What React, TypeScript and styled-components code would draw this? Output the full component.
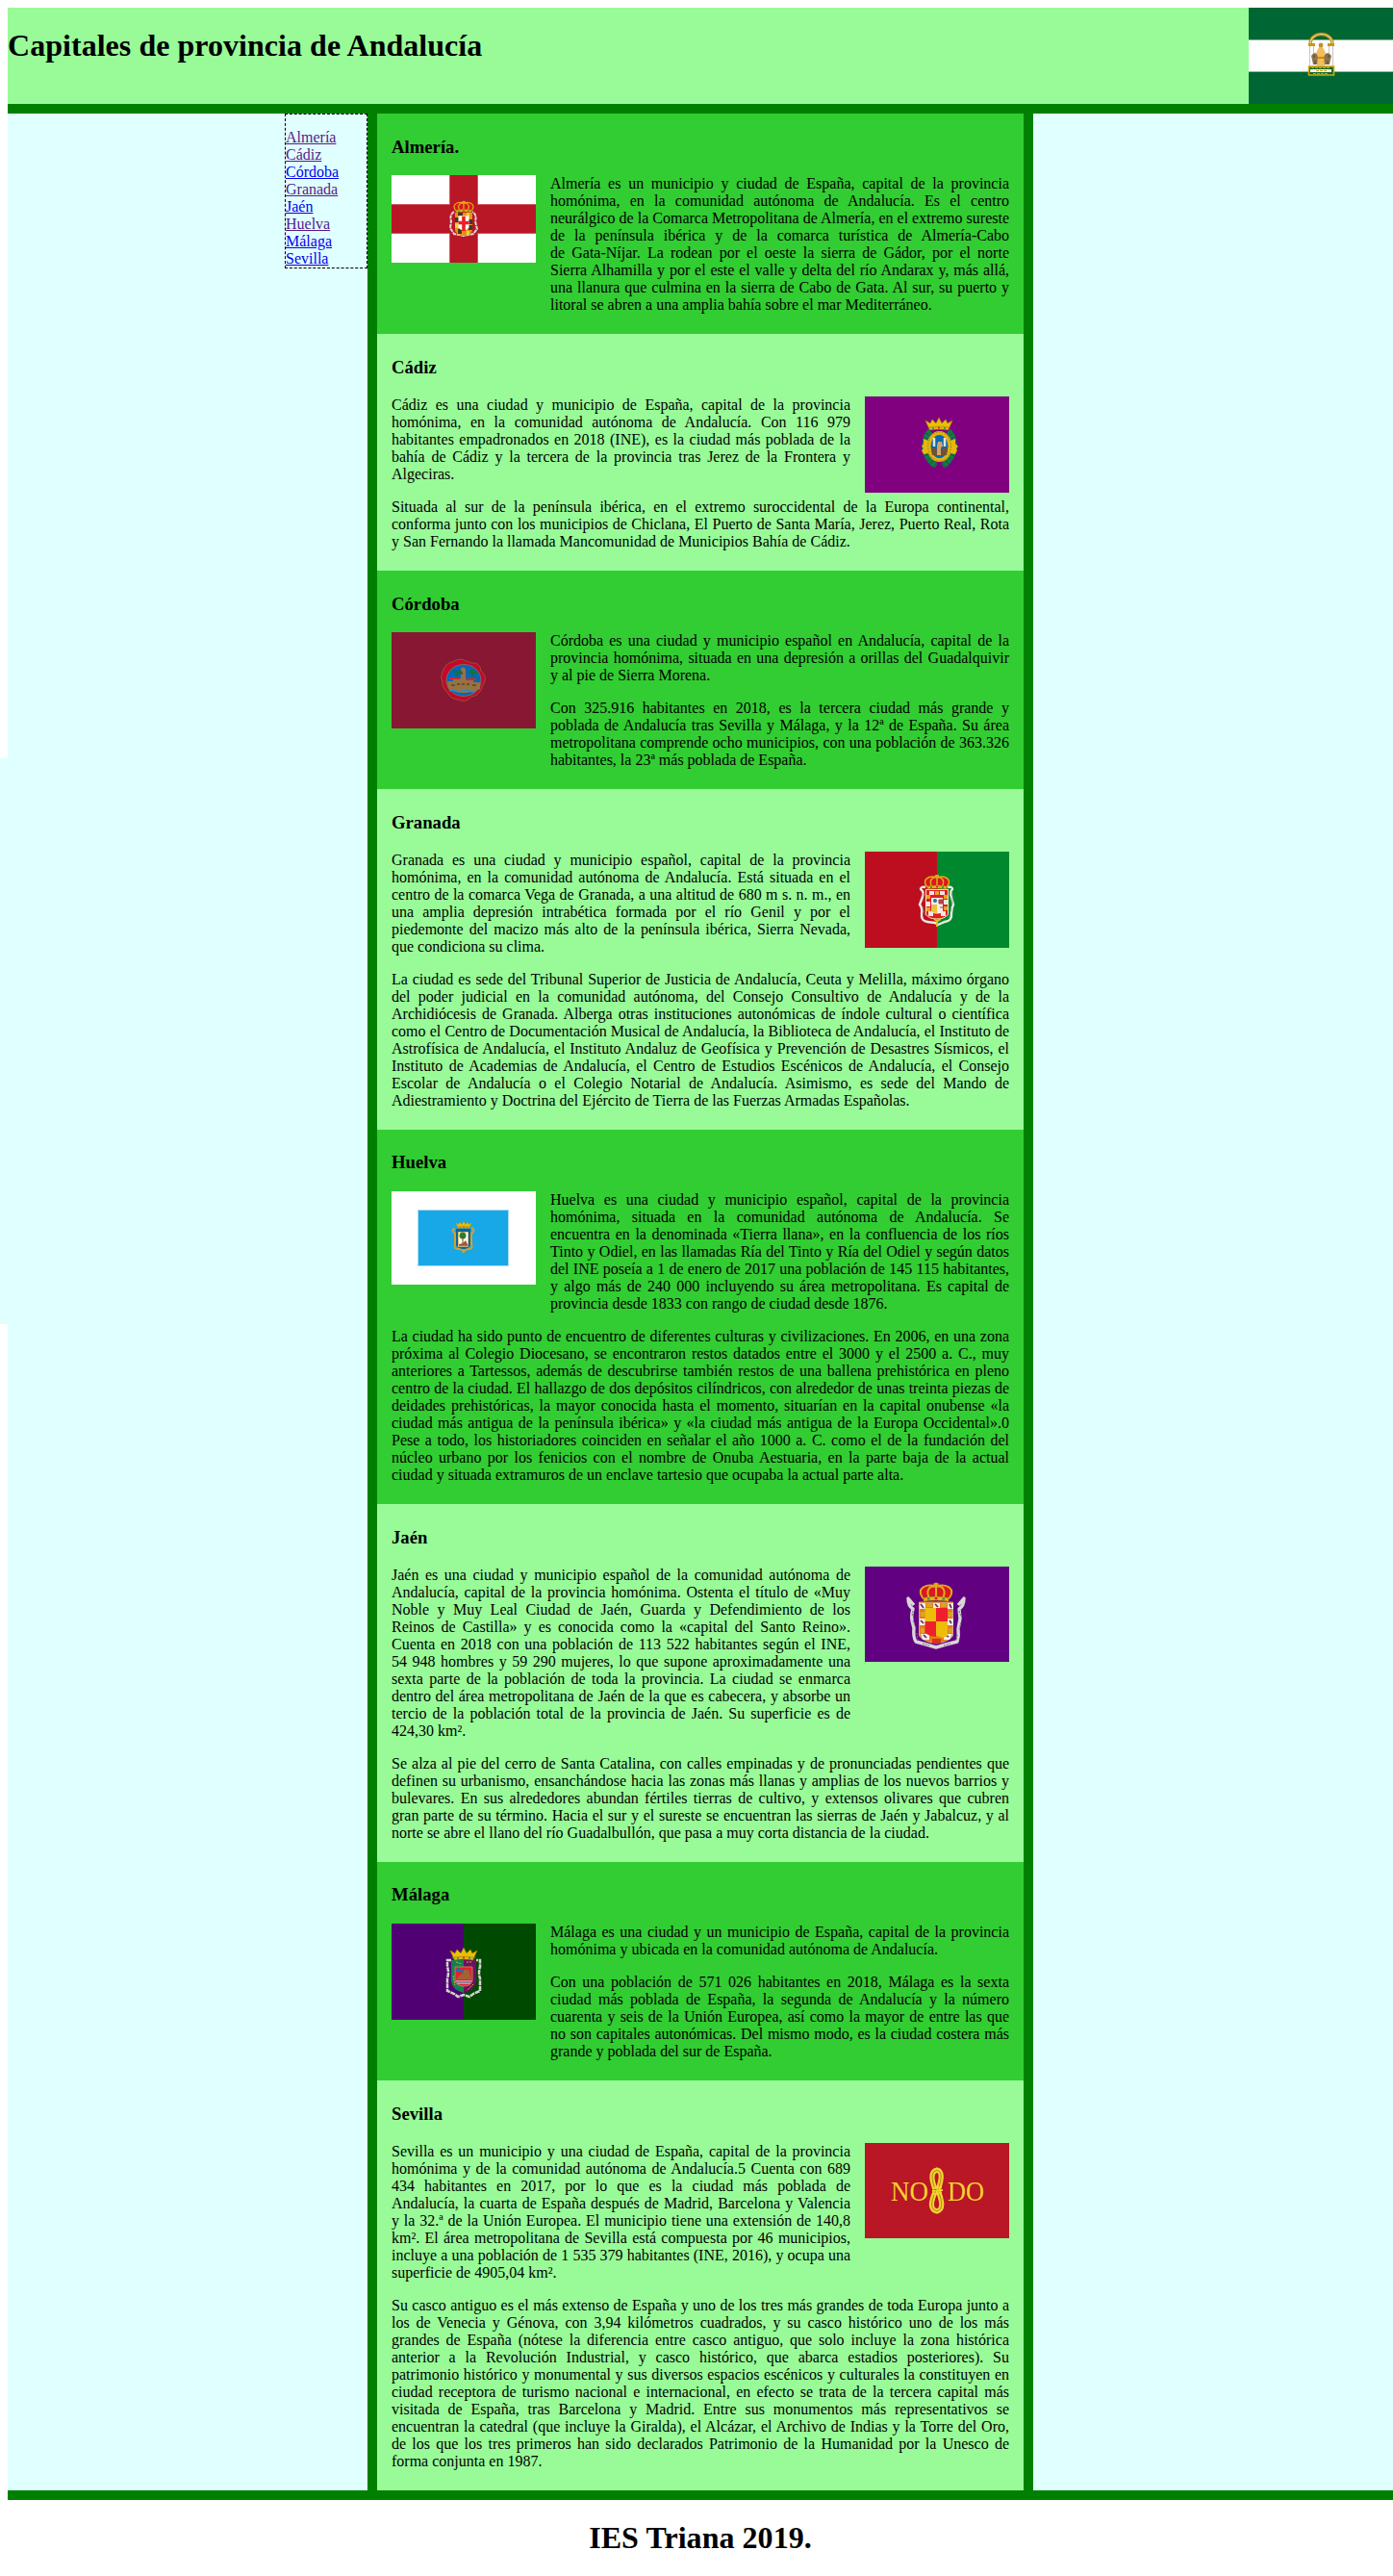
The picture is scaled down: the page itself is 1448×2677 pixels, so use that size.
import React from "react";
import styled, { createGlobalStyle } from "styled-components";

const Global = createGlobalStyle`
  body { margin: 0; background: #fff; color: #000; font: 16px/18px "Liberation Serif", "Times New Roman", serif; }
`;

const Page = styled.div`
  display: grid;
  grid-template-columns: 8px 1440px;
  width: 1448px;
  height: 2677px;
  overflow: hidden;
`;
const Gutter = styled.div`
  height: 588px;
  margin-top: 788px;
  background: #e0ffff;
`;
const Content = styled.div`
  padding-top: 8px;
`;
const Header = styled.header`
  display: flex;
  justify-content: space-between;
  align-items: flex-start;
  height: 100px;
  background: #98fb98;
  border-bottom: 10px solid #008000;
`;
const Title = styled.h1`
  margin: 21.44px 0;
  font-size: 32px;
  line-height: 37px;
  letter-spacing: 0.04px;
`;
const Columns = styled.div`
  display: grid;
  grid-template-columns: 374px 692px 374px;
  background: #e0ffff;
  border-bottom: 10px solid #008000;
`;
const Side = styled.div`
  display: flex;
  justify-content: flex-end;
  align-items: flex-start;
`;
const Nav = styled.nav`
  box-sizing: border-box;
  display: flex;
  flex-direction: column;
  align-items: flex-start;
  width: 86px;
  padding-top: 15px;
  border: 1px dashed #000;
`;
const NavLink = styled.a<{ $visited?: boolean }>`
  color: ${(p) => (p.$visited ? "#551a8b" : "#0000ee")};
  text-decoration: underline;
`;
const Main = styled.main`
  border: solid #008000;
  border-width: 0 10px;
`;
const Section = styled.section<{ $dark: boolean }>`
  display: flow-root;
  padding: 5px 15px;
  background: ${(p) => (p.$dark ? "#32cd32" : "#98fb98")};
`;
const Heading = styled.h3`
  margin: 18.72px 0;
  font-size: 18.72px;
  line-height: 22px;
`;
const Text = styled.p`
  display: flow-root;
  margin: 16px 0;
  text-align: justify;
`;
const NoWrap = styled.span`
  white-space: nowrap;
`;
const Flag = styled.svg<{ $side?: "left" | "right" }>`
  display: block;
  flex: none;
  float: ${(p) => p.$side ?? "none"};
  margin: ${(p) => (p.$side === "left" ? "0 15px 0 0" : p.$side === "right" ? "0 0 0 15px" : "0")};
`;
const Foot = styled.footer`
  text-align: center;
`;

/* Phrases between square brackets are kept together on one line. */
const phrases = (text: string) =>
  text.split(/[[\]]/).map((part, i) => (i % 2 ? <NoWrap key={i}>{part}</NoWrap> : part));

/* Royal crown, 26 wide and 14 high, centred on x = 0 with its base at y = 0. */
const Crown = ({ x, y, s = 1, open = false }: { x: number; y: number; s?: number; open?: boolean }) => (
  <g transform={`translate(${x} ${y}) scale(${s})`}>
    {open ? (
      <path d="M-10 0L-14-9l5 3 2-4 4 4 3-6 3 6 4-4 2 4 5-3-4 9z" fill="#eac102" stroke="#a8820a" strokeWidth=".6" />
    ) : (
      <>
        <path d="M-10-1C-17-9-8-14 0-11 8-14 17-9 10-1z" fill="#d9181f" />
        <path d="M-10-1C-17-9-8-14 0-11 8-14 17-9 10-1M-5-1C-9-8-5-12 0-11 5-12 9-8 5-1M0-1v-13M-2-13h4" fill="none" stroke="#e0ae18" strokeWidth="1.5" />
      </>
    )}
    <path d="M-10-2Q0-4 10-2V1Q0-1-10 1z" fill="#e4b51b" stroke="#9a700b" strokeWidth=".5" />
    <path d="M-7-1h2M5-1h2" stroke="#159447" strokeWidth="1.4" />
    <path d="M-1-1.5h2" stroke="#df1721" strokeWidth="1.6" />
  </g>
);

const Andalucia = () => (
  <Flag width="150" height="100" viewBox="0 0 150 100" role="img">
    <path fill="#006633" d="M0 0h150v100H0z" />
    <path fill="#fff" stroke="#8bb8a0" d="M-1 33.5h152v33H-1z" />
    <path d="M64 38c0-14 23-14 23 0" fill="none" stroke="#b98d13" strokeWidth="3.4" />
    <path d="M64 38c0-14 23-14 23 0" fill="none" stroke="#f2dda0" strokeWidth="1.2" />
    <path d="M63.500 40v20M67.500 40v14M83.500 40v14M87.500 40v20" stroke="#c5c5c5" />
    <path d="M62 37h7v3h-7zM82 37h7v3h-7z" fill="#c79a11" />
    <path d="M65 50q4-6 8 0v9h-6zM86 50q-4-6-8 0v9h6z" fill="#8d7350" />
    <path d="M68 49v3M83 49v3M69 55v4M82 55v4" stroke="#54442e" />
    <circle cx="75" cy="39" r="2.400" fill="#c98d2c" />
    <path d="M73 41h4l3 6-2 4 1 9h-8l1-9-2-4z" fill="#f4bd5c" />
    <path d="M71 51h8v2h-8z" fill="#c38d04" />
    <path d="M62.500 61h26v9h-26z" fill="#08682f" stroke="#d2a808" strokeWidth="1.600" />
    <path d="M64 64h22v3H64z" fill="#f5f2d8" />
    <path d="M65 62.500h20M67 68.500h16M70 65.500h11" stroke="#c9a21a" strokeDasharray="3 1" />
  </Flag>
);

const Almeria = () => (
  <Flag width="150" height="91" viewBox="0 0 150 91" role="img" $side="left">
    <path fill="#fff" d="M0 0h150v91H0z" />
    <path fill="#b91626" d="M60 0h30v30h60v31H90v30H60V61H0V30h60z" />
    <path d="M60.500 0v30.500H0M89.500 0v30.500h61M60.500 91V60.500H0M89.500 91V60.500h61" fill="none" stroke="#d76871" strokeWidth=".8" />
    <path d="M65 38q-5 3-3 10l-1 7 4 6 10 2 10-2 4-5-2-8q2-7-3-10" fill="none" stroke="#ddd8d5" strokeWidth="2" strokeDasharray="4 .7" />
    <path d="M66 39h18v19q-3 5-9 5t-9-5z" fill="#e69118" />
    <path d="M66 44h4v5h-4zM80 52h4v5h-4zM69 39h5v3h-5zM78 46h6v5h-6zM69 56h4v5h-4z" fill="#453928" />
    <path d="M66 50h4v5h-4zM78 39h3v4h-3zM78 58h3v4h-3z" fill="#edcf42" />
    <path d="M69.500 42.500h11v12q-5.500 6-11 0z" fill="#fff" />
    <path d="M75 43v15M69.500 49.500h11" stroke="#ef1c25" strokeWidth="3.600" />
    <Crown x={75} y={38} s={0.8} />
  </Flag>
);

const Cadiz = () => (
  <Flag width="150" height="100" viewBox="0 0 150 100" role="img" $side="right">
    <path fill="#800080" d="M0 0h150v100H0z" />
    <path d="M68 36c-8 8-9 26 6 36M87 36c8 8 9 26-6 36" fill="none" stroke="#078044" strokeWidth="6" strokeDasharray="4 .5" />
    <path d="M61 44l5 2v13l-5 1-2-4 2-2-2-2 2-3zM94 44l-5 2v13l5 1 2-4-1-2 2-2-3-3z" fill="#e5b80e" />
    <ellipse cx="77.500" cy="52" rx="11" ry="14" fill="#0869b2" stroke="#dfb411" strokeWidth="4" />
    <ellipse cx="77.500" cy="52" rx="12" ry="15" fill="none" stroke="#826e13" strokeWidth=".9" strokeDasharray="1 2" />
    <path d="M72 43v9M83 43v9" stroke="#e9e3cc" strokeWidth="2.500" />
    <path d="M69 55q4-5 6 1l1 5h-6zM86 55q-4-5-6 1l-1 5h6z" fill="#715136" />
    <path d="M75 51l1-4h4l1 5-2 1v8h-4z" fill="#d7a36a" />
    <Crown x={77} y={34} open />
  </Flag>
);

const Cordoba = () => (
  <Flag width="150" height="100" viewBox="0 0 150 100" role="img" $side="left">
    <path fill="#871733" d="M0 0h150v100H0z" />
    <path d="M73 28q5 2 10 4 9-1 10 8 6 6 4 11-3 5-4 9-3 6-10 7-6 7-14 3-8-1-10-6-7-7-6-12-3-5 0-11 3-9 10-10 5-3 10-3z" fill="#c20929" stroke="#95603b" strokeWidth=".8" />
    <ellipse cx="75" cy="50" rx="18" ry="16.500" fill="#0866b6" stroke="#9a7050" strokeWidth=".8" />
    <path d="M58 51h6v-3h8V38l2-2 3 2v10h8v4h7v7q-9 4-17 4-9 0-16-4z" fill="#967343" />
    <path d="M60 47h11v2H60zM77 48h11v2H77z" fill="#d22834" />
    <path d="M65 41l4 3 4-3-4-1zM80 41l4 3 5-2-5-3zM84 42v6M68 43v5" stroke="#16723a" fill="#16723a" />
    <path d="M62 55h4M68 54h3M73 54h3M78 54h3M84 55h4M73 41v3" stroke="#5d4325" strokeWidth="1.500" />
    <path d="M60 61q4-2 7 0t7 0 7 0 7 0" fill="none" stroke="#2d8aca" strokeWidth="1.500" />
  </Flag>
);

const Granada = () => (
  <Flag width="150" height="100" viewBox="0 0 150 100" role="img" $side="right">
    <path fill="#bd0e20" d="M0 0h75v100H0z" />
    <path fill="#00882e" d="M75 0h75v100H75z" />
    <path d="M63 37q-5-1-5 2 4 3 2 8l-3 8q3 4 2 9-1 8 6 9l8 1 3 2 7-3q8-1 7-9 0-5 2-9l-2-8q-2-5 1-8 0-3-5-2" fill="none" stroke="#eeeae2" strokeWidth="2.400" />
    <path d="M61 43v9M60 57l3 10M91 43v11M90 59l-3 10" fill="none" stroke="#817f70" strokeWidth=".7" />
    <path d="M63.500 39.500h23V65q-3 5-11.500 5-9 0-11.500-5z" fill="#e11d24" stroke="#eee2b7" />
    <path d="M67 41h5v4h-5zM78 41h5v4h-5zM64 52h4v5h-4zM82 50h4v5h-4zM66 62h5v5h-5zM79 62h5v5h-5z" fill="#f1e5df" />
    <path d="M64 45h4v4h-4zM82 45h4v4h-4zM64 58h4v4h-4zM82 57h4v4h-4zM73 41h4v4h-4z" fill="#e7a41f" />
    <path d="M69 48h12v15q-6 3-12 0z" fill="#f2eee7" />
    <path d="M69 55h6v9q-4 0-6-2z" fill="#edc33b" />
    <circle cx="73" cy="51" r="2" fill="#2f6caa" />
    <path d="M77 50h4v4h-4zM78 58h3" fill="#b84443" stroke="#a5484c" />
    <path d="M72 70l3 2 4-2M75 71v7" stroke="#e3bd24" strokeWidth="2" fill="none" />
    <Crown x={75} y={38} />
  </Flag>
);

const Huelva = () => (
  <Flag width="150" height="97" viewBox="0 0 150 97" role="img" $side="left">
    <path fill="#fff" d="M0 0h150v97H0z" />
    <path fill="#18a8e8" stroke="#a8dcf4" d="M27.500 19.500h94v58h-94z" />
    <path d="M66 39q-5 1 0 5v11q-2 5 4 5 5 0 5 4 0-4 5-4 5 0 3-5V44q5-4 0-6" fill="none" stroke="#d9a223" strokeWidth="2" />
    <path d="M67 39h15v17q-2 4-7 4t-8-4z" fill="#0b639f" />
    <path d="M69.500 42.500h10v15h-10z" fill="#fff" stroke="#e3c270" />
    <circle cx="74" cy="46" r="3.500" fill="#297f32" />
    <path d="M74 47v10" stroke="#6d4623" />
    <path d="M70 55l4-1 3-3 3 6H70z" fill="#ac532d" />
    <path d="M70 57h10" stroke="#79a8bc" />
    <Crown x={75} y={38} s={0.6} open />
  </Flag>
);

const Jaen = () => (
  <Flag width="150" height="99" viewBox="0 0 150 99" role="img" $side="right">
    <path fill="#620082" d="M0 0h150v99H0z" />
    <path d="M51 40l-6-7q0 8 5 11-2 7-1 12l2 8q-1 9 2 14l11 3 10 3 10-3 12-3q2-6 1-13l2-11-1-10q5-3 5-11l-6 7" fill="none" stroke="#d9d6d7" strokeWidth="3.400" strokeLinejoin="round" />
    <path d="M50 46l-1 6M50 56l3 8M54 69l1 8M98 46l2 6M100 58l-2 7M96 71l-1 6M60 80l7 2M82 82l7-2" fill="none" stroke="#77727d" strokeDasharray="2 1" />
    <path d="M56.500 37h35v35q-4 6-17.500 8-13-2-17.500-8z" fill="#e77b19" stroke="#e7d4b5" strokeWidth=".7" />
    <path d="M57 38h6v6h-6zM71 38h7v5h-7zM86 38h6v6h-6zM57 54h6v7h-6zM86 54h6v7h-6zM58 70h9v6h-7zM82 70h9l-3 6h-6z" fill="#f5eee9" />
    <path d="M58 39l3 4M73 39l3 3M88 39l2 4M58 56l3 3M88 56l2 3M61 71l3 3M84 71l3 2" stroke="#613150" strokeWidth="1.700" />
    <path d="M64 38h6v4h-6zM79 38h6v4h-6zM57.500 47h5v5h-5zM87 47h4v5h-4zM58 64h4v5h-4zM87 64h4v5h-4z" fill="#dba323" />
    <path d="M62.500 43H74v14H62.500zM74 57h12v15l-5 2-7-2z" fill="#edbd0a" />
    <path d="M74 43h12v14H74zM62.500 57H74v16l-6-1-5.500-3z" fill="#ef202c" />
    <path d="M70 75h9v5h-9z" fill="#d63320" />
    <Crown x={74} y={35} s={1.3} />
  </Flag>
);

const Malaga = () => (
  <Flag width="150" height="100" viewBox="0 0 150 100" role="img" $side="left">
    <path fill="#500073" d="M0 0h75v100H0z" />
    <path fill="#004900" d="M75 0h75v100H75z" />
    <path d="M62 38h-4v7q2 6 0 12v13l7 3 4 3 6-2 6 2 4-3 7-3V57q-2-6 0-12v-7h-4" fill="none" stroke="#d2d4cf" strokeWidth="2.500" strokeDasharray="5 .7" />
    <path d="M62 38h13v34q-12-3-13-12z" fill="#118150" />
    <path d="M75 38h13v22q-1 9-13 12z" fill="#710e65" />
    <path d="M66 45h18v14q-1 6-9 6t-9-6z" fill="#e02232" stroke="#b7834c" />
    <path d="M67 58q5-6 7-6l1-4h5l3 10z" fill="#a06335" />
    <path d="M67 49h5M69 46v4M73 48v3" stroke="#276cae" strokeWidth="2" />
    <path d="M67 60h16M68 62h14" stroke="#e5eef4" />
    <path d="M67 61h16" stroke="#347cae" />
    <path d="M67 40l6 2M64 54l2 10M78 40h6M85 63l-6 6" stroke="#d4a337" strokeDasharray="2 1" />
    <path d="M62 36q13-14 26 0z" fill="#147d45" />
    <Crown x={75} y={37} open />
  </Flag>
);

const Motto = styled.text`
  font: 29px "Liberation Serif", "Times New Roman", serif;
  fill: #f4d32d;
`;
const Sevilla = () => (
  <Flag width="150" height="99" viewBox="0 0 150 99" role="img" $side="right">
    <path fill="#b91626" d="M0 0h150v99H0z" />
    <Motto x="27" y="60" textLength="39" lengthAdjust="spacingAndGlyphs">NO</Motto>
    <Motto x="86" y="60" textLength="38" lengthAdjust="spacingAndGlyphs">DO</Motto>
    <g fill="none" stroke="#f4d32d" strokeWidth="5.200">
      <path d="M73 48q-7-18 2-20 8 2 1 21" />
      <path d="M73 51q-8 18 2 20 9-2 1-22" />
    </g>
    <g fill="none" stroke="#a46d1d" strokeWidth=".8">
      <path d="M73 48q-7-18 2-20 8 2 1 21" />
      <path d="M73 51q-8 18 2 20 9-2 1-22" />
    </g>
    <path d="M70 47l10-1M70 50l11-1M71 53l9-1" stroke="#f4d32d" strokeWidth="2" />
  </Flag>
);

const links = [
  { name: "Almería", visited: true },
  { name: "Cádiz", visited: true },
  { name: "Córdoba" },
  { name: "Granada", visited: true },
  { name: "Jaén" },
  { name: "Huelva", visited: true },
  { name: "Málaga" },
  { name: "Sevilla" },
];

const cities = [
  {
    id: "Almería", title: "Almería.", Emblem: Almeria,
    text: ["Almería es un municipio y ciudad de España, capital de la provincia homónima, en la comunidad autónoma de Andalucía. Es el centro neurálgico de la Comarca Metropolitana de Almería, en el extremo sureste de la península ibérica y de la comarca turística de Almería-Cabo [de Gata-Níjar.] La rodean por el oeste la sierra de Gádor, por el norte [Sierra Alhamilla] y por el este el valle y delta del río Andarax y, más allá, una llanura que culmina en la sierra de Cabo de Gata. Al sur, su puerto y litoral se abren a una amplia bahía sobre el mar Mediterráneo."],
  },
  {
    id: "Cádiz", title: "Cádiz", Emblem: Cadiz,
    text: [
      "Cádiz es una ciudad y municipio de España, capital de la provincia homónima, en la comunidad autónoma de Andalucía. Con 116 979 habitantes empadronados en 2018 (INE), es la ciudad más poblada de la bahía de Cádiz y la tercera de la provincia tras Jerez de la Frontera y Algeciras.",
      "Situada al sur de la península ibérica, en el extremo suroccidental de la Europa continental, conforma junto con los municipios de Chiclana, El Puerto de Santa María, Jerez, Puerto Real, Rota y San Fernando la llamada Mancomunidad de Municipios Bahía de Cádiz.",
    ],
  },
  {
    id: "Córdoba", title: "Córdoba", Emblem: Cordoba,
    text: [
      "Córdoba es una ciudad y municipio español en Andalucía, capital de la provincia homónima, situada en una depresión a orillas del Guadalquivir y al pie de Sierra Morena.",
      "Con 325.916 habitantes en 2018, es la tercera ciudad más grande y poblada de Andalucía tras Sevilla y Málaga, y la 12ª de España. Su área metropolitana comprende ocho municipios, con una población de 363.326 habitantes, la 23ª más poblada de España.",
    ],
  },
  {
    id: "Granada", title: "Granada", Emblem: Granada,
    text: [
      "Granada es una ciudad y municipio español, capital de la provincia homónima, en la comunidad autónoma de Andalucía. Está situada en el centro de la comarca Vega de Granada, a una altitud de 680 m s. n. m., en una amplia depresión intrabética formada por el río Genil y por el piedemonte del macizo más alto de la península ibérica, Sierra Nevada, que condiciona su clima.",
      "La ciudad es sede del Tribunal Superior de Justicia de Andalucía, Ceuta y Melilla, máximo órgano del poder judicial en la comunidad autónoma, del Consejo Consultivo de Andalucía y de la Archidiócesis de Granada. Alberga otras instituciones autonómicas de índole cultural o científica como el Centro de Documentación Musical de Andalucía, la Biblioteca de Andalucía, el Instituto de Astrofísica de Andalucía, el Instituto Andaluz de Geofísica y Prevención de Desastres Sísmicos, el Instituto de Academias de Andalucía, el Centro de Estudios Escénicos de Andalucía, el Consejo Escolar de Andalucía o el Colegio Notarial de Andalucía. Asimismo, es sede del Mando de Adiestramiento y Doctrina del Ejército de Tierra de las Fuerzas Armadas Españolas.",
    ],
  },
  {
    id: "Huelva", title: "Huelva", Emblem: Huelva,
    text: [
      "Huelva es una ciudad y municipio español, capital de la provincia homónima, situada en la comunidad autónoma de Andalucía. Se [encuentra en la] denominada «Tierra llana», en la confluencia de los ríos Tinto y Odiel, en las llamadas Ría del Tinto y Ría del Odiel y según datos del INE poseía a 1 de enero de 2017 una población de 145 115 habitantes, y algo más de 240 000 incluyendo su área metropolitana. Es capital de provincia desde 1833 con rango de ciudad desde 1876.",
      "La ciudad ha sido punto de encuentro de diferentes culturas y civilizaciones. En 2006, en una zona próxima al Colegio Diocesano, se encontraron restos datados entre el 3000 y el 2500 a. C., muy anteriores a Tartessos, además de descubrirse también restos de una ballena prehistórica en pleno centro de la ciudad. El hallazgo de dos depósitos cilíndricos, con alrededor de unas treinta piezas de deidades prehistóricas, la mayor conocida hasta el momento, situarían en la capital onubense «la ciudad más antigua de la península ibérica» y «la ciudad más antigua de la Europa Occidental».0 Pese a todo, los historiadores coinciden en señalar el año 1000 a. C. como el de la fundación del núcleo urbano por los fenicios con el nombre de Onuba Aestuaria, en la parte baja de la actual ciudad y situada extramuros de un enclave tartesio que ocupaba la actual parte alta.",
    ],
  },
  {
    id: "Jaén", title: "Jaén", Emblem: Jaen,
    text: [
      "Jaén es una ciudad y municipio español de la comunidad autónoma de Andalucía, capital de la provincia homónima. Ostenta el título de «Muy Noble y Muy Leal Ciudad de Jaén, Guarda y Defendimiento de los [Reinos de Castilla»] y es conocida como la «capital del Santo Reino». [Cuenta en 2018] con una población de 113 522 habitantes según el INE, [54 948 hombres] y 59 290 mujeres, lo que supone aproximadamente una [sexta parte] de la población de toda la provincia. La ciudad se enmarca dentro del área metropolitana de Jaén de la que es cabecera, y absorbe un tercio de la población total de la provincia de Jaén. Su superficie es de [424,30 km²].",
      "Se alza al pie del cerro de Santa Catalina, con calles empinadas y de pronunciadas pendientes que definen su urbanismo, ensanchándose hacia las zonas más llanas y amplias de los nuevos barrios y bulevares. En sus alrededores abundan fértiles tierras de cultivo, y extensos olivares que cubren gran parte de su término. Hacia el sur y el sureste se encuentran las sierras de Jaén y Jabalcuz, y al norte se abre el llano del río Guadalbullón, que pasa a muy corta distancia de la ciudad.",
    ],
  },
  {
    id: "Málaga", title: "Málaga", Emblem: Malaga,
    text: [
      "Málaga es una ciudad y un municipio de España, capital de la provincia homónima y ubicada en la comunidad autónoma de Andalucía.",
      "Con una población de 571 026 habitantes en 2018, Málaga es la sexta ciudad más poblada de España, la segunda de Andalucía y la número cuarenta y seis de la Unión Europea, así como la mayor de entre las que no son capitales autonómicas. Del mismo modo, es la ciudad costera más grande y poblada del sur de España.",
    ],
  },
  {
    id: "Sevilla", title: "Sevilla", Emblem: Sevilla,
    text: [
      "Sevilla es un municipio y una ciudad de España, capital de la provincia homónima y de la comunidad autónoma de Andalucía.5 Cuenta con 689 434 habitantes en 2017, por lo que es la ciudad más poblada de [Andalucía, la cuarta] de España después de Madrid, Barcelona y Valencia [y la 32.ª] de la Unión Europea. El municipio tiene una extensión de 140,8 [km². El área] metropolitana de Sevilla está compuesta por 46 municipios, [incluye a una] población de 1 535 379 habitantes (INE, 2016), y ocupa una superficie de 4905,04 km².",
      "Su casco antiguo es el más extenso de España y uno de los tres más grandes de toda Europa junto a los de Venecia y Génova, con 3,94 kilómetros cuadrados, y su casco histórico uno de los más grandes de España (nótese la diferencia entre casco antiguo, que solo incluye la zona histórica anterior a la Revolución Industrial, y casco histórico, que abarca estadios posteriores). Su patrimonio histórico y monumental y sus diversos espacios escénicos y culturales la constituyen en ciudad receptora de turismo nacional e internacional, en efecto se trata de la tercera capital más visitada de España, tras Barcelona y Madrid. Entre sus monumentos más representativos se encuentran la catedral (que incluye la Giralda), el Alcázar, el Archivo de Indias y la Torre del Oro, de los que los tres primeros han sido declarados Patrimonio de la Humanidad por la Unesco de forma conjunta en 1987.",
    ],
  },
];

export default function App() {
  return (
    <>
      <Global />
      <Page>
        <Gutter />
        <Content>
          <Header>
            <Title>Capitales de provincia de Andalucía</Title>
            <Andalucia />
          </Header>
          <Columns>
            <Side>
              <Nav>
                {links.map((l) => (
                  <NavLink key={l.name} href={`#${l.name}`} $visited={l.visited}>{l.name}</NavLink>
                ))}
              </Nav>
            </Side>
            <Main>
              {cities.map(({ id, title, Emblem, text }, i) => (
                <Section key={id} id={id} $dark={i % 2 === 0}>
                  <Heading>{title}</Heading>
                  <Emblem />
                  {text.map((t) => <Text key={t}>{phrases(t)}</Text>)}
                </Section>
              ))}
            </Main>
          </Columns>
          <Foot>
            <Title>IES Triana 2019.</Title>
          </Foot>
        </Content>
      </Page>
    </>
  );
}
